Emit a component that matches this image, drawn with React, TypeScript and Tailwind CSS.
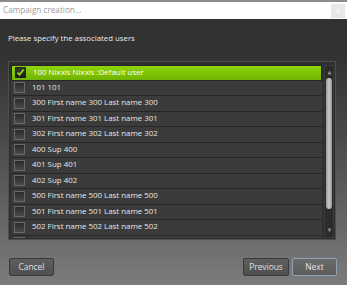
import React from "react";

const users = [
  "100 Nixxis Nixxis :Default user",
  "101 101",
  "300 First name 300 Last name 300",
  "301 First name 301 Last name 301",
  "302 First name 302 Last name 302",
  "400 Sup 400",
  "401 Sup 401",
  "402 Sup 402",
  "500 First name 500 Last name 500",
  "501 First name 501 Last name 501",
  "502 First name 502 Last name 502",
  "",
];

function Check({ checked }: { checked: boolean }) {
  return (
    <div
      className={
        "w-[11px] h-[11px] shrink-0 border flex items-center justify-center " +
        (checked
          ? "border-[#1f2a10] bg-[linear-gradient(to_bottom,#3a3a3a,#1c1c1c)]"
          : "border-[#6a6a6a] bg-[linear-gradient(to_bottom,#2a2a2a,#4a4a4a)]")
      }
    >
      {checked && (
        <svg width="9" height="9" viewBox="0 0 9 9">
          <path d="M1.5 4.6 L3.6 6.8 L7.6 1.6" stroke="#9be21a" strokeWidth="1.6" fill="none" />
        </svg>
      )}
    </div>
  );
}

export default function App() {
  return (
    <div
      className="w-[347px] h-[285px] overflow-hidden flex flex-col"
      style={{ fontFamily: '"Open Sans", "Noto Sans", sans-serif' }}
    >
      {/* title bar */}
      <div className="h-[19px] shrink-0 bg-white border-t-[2px] border-[#8c8c8c] flex items-center justify-between pl-[3px] pr-[2px]">
        <span className="text-[8.2px] text-[#9c9c9c] leading-none">Campaign creation...</span>
        <div className="w-[14px] h-[14px] bg-[#e8e8e8] flex items-center justify-center text-[7px] text-white leading-none">
          x
        </div>
      </div>

      {/* body */}
      <div className="flex-1 flex flex-col bg-[linear-gradient(to_bottom,#313131_0%,#333333_14%,#4a4a4a_45%,#7c7c7c_100%)] px-[8px] pb-[9px]">
        <div className="h-[42px] flex items-center text-[7.8px] text-[#ececec] leading-none pb-[2px]">
          Please specify the associated users
        </div>

        {/* list box */}
        <div className="h-[179px] w-[328px] border border-[#4e4e4e] bg-[#2f2f2f] flex pl-[2px] pt-[3px] pb-[1px] pr-[1px] gap-[2px]">
          <div className="flex-1 flex flex-col overflow-hidden">
            {users.map((u, i) => (
              <div
                key={i}
                className={
                  "h-[15.5px] shrink-0 flex items-center gap-[7px] pl-[3px] border-b border-[#262626] " +
                  (i === 0
                    ? "bg-[linear-gradient(to_bottom,#8fd50a,#70b300)] border border-[#3c5a00]"
                    : "bg-[#3b3b3b]")
                }
              >
                <Check checked={i === 0} />
                <span
                  className={
                    "text-[7.9px] leading-none whitespace-nowrap " +
                    (i === 0 ? "text-white" : "text-[#e6e6e6]")
                  }
                >
                  {u}
                </span>
              </div>
            ))}
          </div>
          {/* scrollbar */}
          <div className="w-[10px] bg-[#2b2b2b] border border-[#3a3a3a] flex flex-col items-center pt-[4px] pb-[4px]">
            <svg width="5" height="5" viewBox="0 0 5 5">
              <path d="M2.5 0.5 L4.5 4.5 L0.5 4.5 Z" fill="#8a8a8a" />
            </svg>
            <div className="mt-[3px] w-[6px] h-[131px] rounded-[3px] bg-[linear-gradient(to_right,#9a9a9a,#c8c8c8,#9a9a9a)]" />
            <div className="flex-1" />
            <svg width="5" height="5" viewBox="0 0 5 5">
              <path d="M0.5 0.5 L4.5 0.5 L2.5 4.5 Z" fill="#8a8a8a" />
            </svg>
          </div>
        </div>

        <div className="flex-1" />

        {/* buttons */}
        <div className="flex items-center">
          <button className="ml-[1px] w-[45px] h-[18px] rounded-[2px] border border-[#3a3a3a] bg-[linear-gradient(to_bottom,#5e5e5e,#505050)] text-[8.4px] text-[#e0e0e0] leading-none">
            Cancel
          </button>
          <div className="flex-1" />
          <button className="w-[46px] h-[18px] rounded-[2px] border border-[#3a3a3a] bg-[linear-gradient(to_bottom,#5e5e5e,#505050)] text-[8.4px] text-[#e0e0e0] leading-none">
            Previous
          </button>
          <button className="ml-[3px] mr-[2px] w-[45px] h-[18px] rounded-[2px] border border-[#8fa2b3] bg-[linear-gradient(to_bottom,#6a6a6a,#5c5c5c)] text-[8.4px] text-[#e6e6e6] leading-none">
            Next
          </button>
        </div>
      </div>
    </div>
  );
}
